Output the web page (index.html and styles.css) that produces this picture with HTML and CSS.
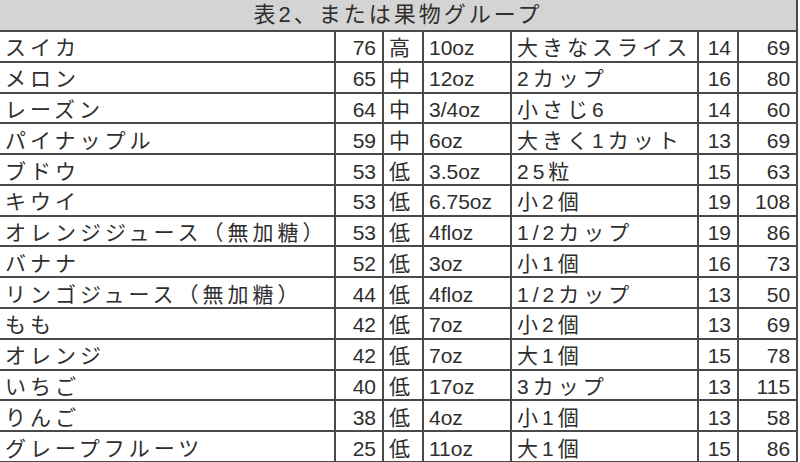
FILE: index.html
```html
<!DOCTYPE html>
<html lang="ja">
<head>
<meta charset="utf-8">
<title>表2、または果物グループ</title>
<link rel="stylesheet" href="styles.css">
</head>
<body>
<table class="fruit">
  <colgroup>
    <col class="c-name"><col class="c-gi"><col class="c-lvl"><col class="c-wt"><col class="c-serv"><col class="c-carb"><col class="c-cal">
  </colgroup>
  <thead>
    <tr><th colspan="7" class="title">表2、または果物グループ</th></tr>
  </thead>
  <tbody>
    <tr><td class="jp">スイカ</td><td class="num">76</td><td class="jp">高</td><td>10oz</td><td class="jp">大きなスライス</td><td class="num">14</td><td class="num">69</td></tr>
    <tr><td class="jp">メロン</td><td class="num">65</td><td class="jp">中</td><td>12oz</td><td class="jp">2カップ</td><td class="num">16</td><td class="num">80</td></tr>
    <tr><td class="jp">レーズン</td><td class="num">64</td><td class="jp">中</td><td>3/4oz</td><td class="jp">小さじ6</td><td class="num">14</td><td class="num">60</td></tr>
    <tr><td class="jp">パイナップル</td><td class="num">59</td><td class="jp">中</td><td>6oz</td><td class="jp">大きく1カット</td><td class="num">13</td><td class="num">69</td></tr>
    <tr><td class="jp">ブドウ</td><td class="num">53</td><td class="jp">低</td><td>3.5oz</td><td class="jp">25粒</td><td class="num">15</td><td class="num">63</td></tr>
    <tr><td class="jp">キウイ</td><td class="num">53</td><td class="jp">低</td><td>6.75oz</td><td class="jp">小2個</td><td class="num">19</td><td class="num">108</td></tr>
    <tr><td class="jp">オレンジジュース（無加糖）</td><td class="num">53</td><td class="jp">低</td><td>4floz</td><td class="jp">1/2カップ</td><td class="num">19</td><td class="num">86</td></tr>
    <tr><td class="jp">バナナ</td><td class="num">52</td><td class="jp">低</td><td>3oz</td><td class="jp">小1個</td><td class="num">16</td><td class="num">73</td></tr>
    <tr><td class="jp">リンゴジュース（無加糖）</td><td class="num">44</td><td class="jp">低</td><td>4floz</td><td class="jp">1/2カップ</td><td class="num">13</td><td class="num">50</td></tr>
    <tr><td class="jp">もも</td><td class="num">42</td><td class="jp">低</td><td>7oz</td><td class="jp">小2個</td><td class="num">13</td><td class="num">69</td></tr>
    <tr><td class="jp">オレンジ</td><td class="num">42</td><td class="jp">低</td><td>7oz</td><td class="jp">大1個</td><td class="num">15</td><td class="num">78</td></tr>
    <tr><td class="jp">いちご</td><td class="num">40</td><td class="jp">低</td><td>17oz</td><td class="jp">3カップ</td><td class="num">13</td><td class="num">115</td></tr>
    <tr><td class="jp">りんご</td><td class="num">38</td><td class="jp">低</td><td>4oz</td><td class="jp">小1個</td><td class="num">13</td><td class="num">58</td></tr>
    <tr><td class="jp">グレープフルーツ</td><td class="num">25</td><td class="jp">低</td><td>11oz</td><td class="jp">大1個</td><td class="num">15</td><td class="num">86</td></tr>
  </tbody>
</table>
</body>
</html>
```
FILE: styles.css
```css
html, body {
  margin: 0;
  padding: 0;
  background: #ffffff;
}

.fruit {
  border-collapse: collapse;
  table-layout: fixed;
  width: 798px;
  font-family: "Liberation Sans", "Noto Sans CJK JP", sans-serif;
  font-size: 21px;
  color: #2e2e2e;
}

.c-name { width: 335px; }
.c-gi { width: 48px; }
.c-lvl { width: 40px; }
.c-wt { width: 88px; }
.c-serv { width: 187px; }
.c-carb { width: 40px; }
.c-cal { width: 59px; }

.title {
  height: 30px;
  padding: 0;
  background: #d4d4d4;
  font-weight: normal;
  font-size: 22px;
  letter-spacing: 3px;
  text-align: center;
  line-height: 30px;
  border-right: 2px solid #4a4a4a;
  border-bottom: 2px solid #4a4a4a;
}

.fruit td {
  height: 30.79px;
  padding: 4px 5px 0 5px;
  box-sizing: border-box;
  line-height: 24px;
  white-space: nowrap;
  overflow: hidden;
  border-right: 2px solid #4a4a4a;
  border-bottom: 2px solid #4a4a4a;
  text-align: left;
  vertical-align: middle;
}

.fruit td.jp {
  letter-spacing: 4px;
}

.fruit td.num {
  text-align: right;
  padding-right: 6px;
}
```
